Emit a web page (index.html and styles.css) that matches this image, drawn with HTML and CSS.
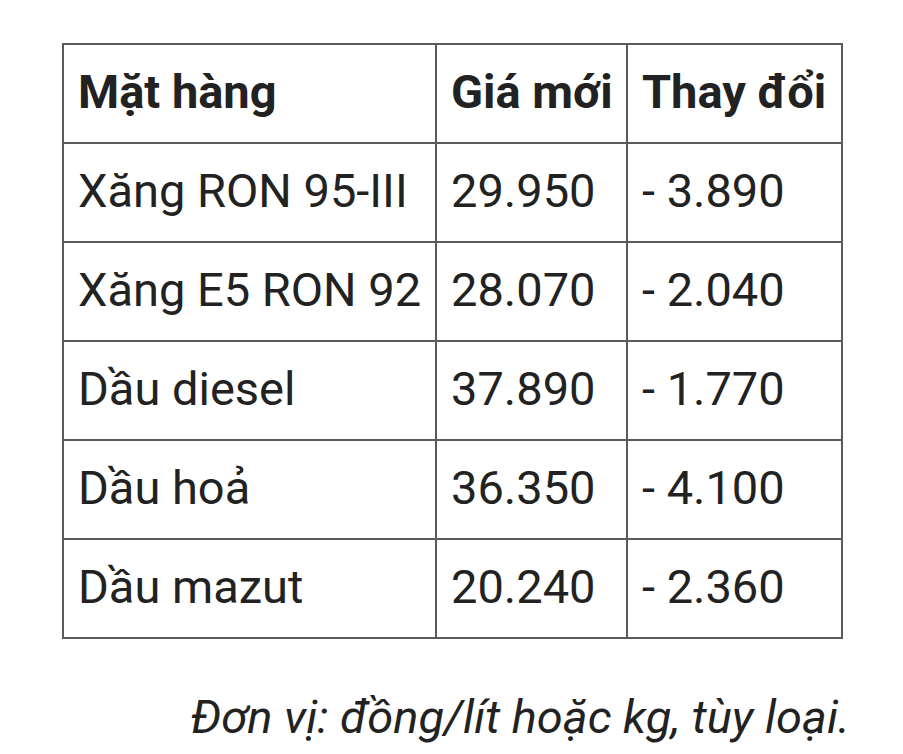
FILE: index.html
```html
<!DOCTYPE html>
<html lang="vi">
<head>
<meta charset="utf-8">
<link rel="stylesheet" href="styles.css">
</head>
<body>
<div class="page">
  <table class="prices">
    <colgroup>
      <col class="c1"><col class="c2"><col class="c3">
    </colgroup>
    <thead>
      <tr><th>Mặt hàng</th><th>Giá mới</th><th>Thay đổi</th></tr>
    </thead>
    <tbody>
      <tr><td>Xăng RON 95-III</td><td>29.950</td><td>- 3.890</td></tr>
      <tr><td>Xăng E5 RON 92</td><td>28.070</td><td>- 2.040</td></tr>
      <tr><td>Dầu diesel</td><td>37.890</td><td>- 1.770</td></tr>
      <tr><td>Dầu hoả</td><td>36.350</td><td>- 4.100</td></tr>
      <tr><td>Dầu mazut</td><td>20.240</td><td>- 2.360</td></tr>
    </tbody>
  </table>
  <p class="note">Đơn vị: đồng/lít hoặc kg, tùy loại.</p>
</div>
</body>
</html>
```

FILE: styles.css
```css
html, body {
  margin: 0;
  padding: 0;
  background: #ffffff;
}
.page {
  padding: 43px 53px 0 62px;
  font-family: Roboto, "Noto Sans", sans-serif;
  color: #222222;
}
.prices {
  border-collapse: collapse;
  table-layout: fixed;
  width: 779px;
  font-size: 47px;
}
.c1 { width: 373px; }
.c2 { width: 191px; }
.c3 { width: 215px; }
.prices th,
.prices td {
  border: 2px solid #5a5a5a;
  height: 95px;
  padding: 0 0 2px 14px;
  text-align: left;
  vertical-align: middle;
  white-space: nowrap;
  line-height: 1.2;
}
.prices th {
  font-weight: 700;
}
.prices td {
  font-weight: 400;
}
.note {
  margin: 52px 0 0 0;
  text-align: right;
  font-size: 47px;
  font-style: italic;
  line-height: 1.1;
}
```
